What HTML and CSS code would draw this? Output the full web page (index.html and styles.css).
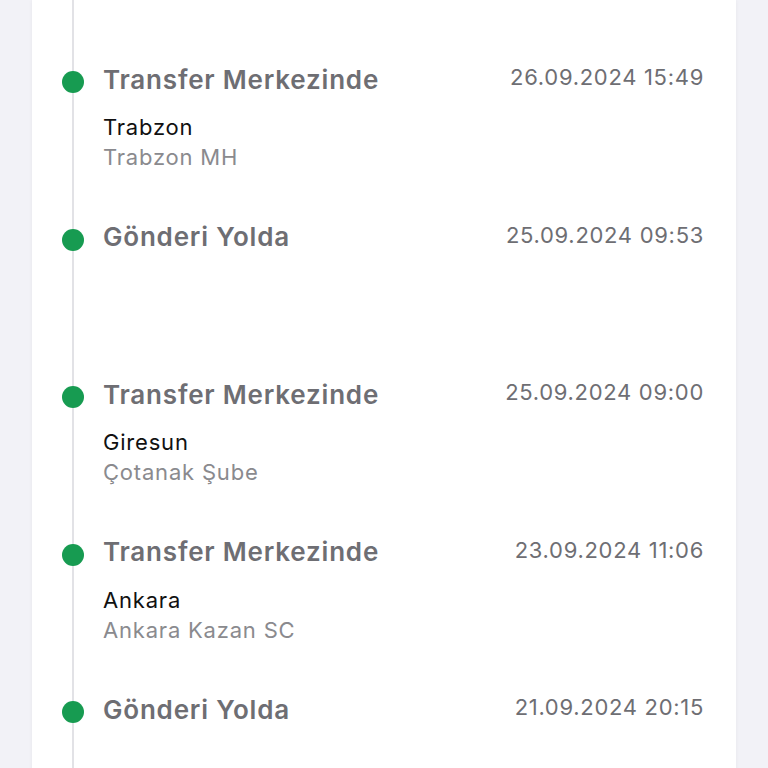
FILE: index.html
```html
<!DOCTYPE html>
<html lang="tr">

<head>
    <meta charset="utf-8">
    <title>Gönderi Hareketleri</title>
    <link rel="stylesheet" href="styles.css">
</head>

<body>
    <div class="card">
        <ul class="timeline">
            <li class="step">
                <span class="dot"></span>
                <div class="step-body">
                    <div class="step-head">
                        <span class="step-title">Transfer Merkezinde</span>
                        <span class="step-date">26.09.2024 15:49</span>
                    </div>
                    <div class="step-place">Trabzon</div>
                    <div class="step-branch">Trabzon MH</div>
                </div>
            </li>
            <li class="step">
                <span class="dot"></span>
                <div class="step-body">
                    <div class="step-head">
                        <span class="step-title">Gönderi Yolda</span>
                        <span class="step-date">25.09.2024 09:53</span>
                    </div>
                </div>
            </li>
            <li class="step">
                <span class="dot"></span>
                <div class="step-body">
                    <div class="step-head">
                        <span class="step-title">Transfer Merkezinde</span>
                        <span class="step-date">25.09.2024 09:00</span>
                    </div>
                    <div class="step-place">Giresun</div>
                    <div class="step-branch">Çotanak Şube</div>
                </div>
            </li>
            <li class="step">
                <span class="dot"></span>
                <div class="step-body">
                    <div class="step-head">
                        <span class="step-title">Transfer Merkezinde</span>
                        <span class="step-date">23.09.2024 11:06</span>
                    </div>
                    <div class="step-place">Ankara</div>
                    <div class="step-branch">Ankara Kazan SC</div>
                </div>
            </li>
            <li class="step">
                <span class="dot"></span>
                <div class="step-body">
                    <div class="step-head">
                        <span class="step-title">Gönderi Yolda</span>
                        <span class="step-date">21.09.2024 20:15</span>
                    </div>
                </div>
            </li>
        </ul>
    </div>
</body>

</html>
```

FILE: styles.css
```css
body {
    margin: 0;
    background-color: #f2f2f7;
    font-family: Inter, "Noto Sans", sans-serif;
    height: 768px;
    overflow: hidden;
}

.card {
    margin: 0 32px;
    min-height: 768px;
    background-color: #ffffff;
    box-shadow: 0 0 4px rgba(0, 0, 0, 0.05);
}

.timeline {
    list-style: none;
    margin: 0;
    padding: 63px 32px 0 30px;
    position: relative;
}

/* the vertical rail behind the dots */
.timeline::before {
    content: "";
    position: absolute;
    top: 0;
    bottom: -100px;
    left: 40px;
    width: 2px;
    background-color: #e2e2e6;
}

.step {
    display: flex;
    align-items: flex-start;
    gap: 19px;
    height: 157.5px;
    position: relative;
}

.dot {
    flex: none;
    width: 22px;
    height: 22px;
    margin-top: 8px;
    border-radius: 50%;
    background-color: #179b51;
}

.step-body {
    flex: 1;
}

.step-head {
    display: flex;
    justify-content: space-between;
    align-items: center;
    height: 32px;
}

.step-title {
    font-size: 26px;
    font-weight: 600;
    color: #6e6e73;
    letter-spacing: 0.8px;
}

.step-date {
    font-size: 22px;
    color: #6e6e73;
    letter-spacing: 0.7px;
    margin-top: -4px;
}

.step-place {
    margin-top: 17px;
    font-size: 22px;
    line-height: 30px;
    color: #111111;
    letter-spacing: 0.8px;
}

.step-branch {
    font-size: 22px;
    line-height: 30px;
    color: #8a8a8e;
    letter-spacing: 0.8px;
}
```
